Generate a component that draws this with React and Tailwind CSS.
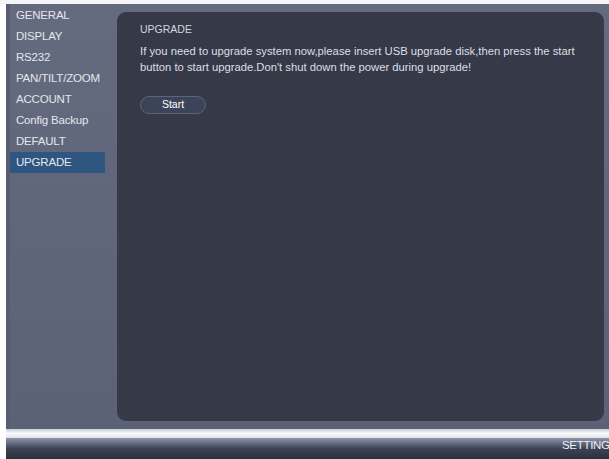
import React from 'react'

const menu = [
  'GENERAL',
  'DISPLAY',
  'RS232',
  'PAN/TILT/ZOOM',
  'ACCOUNT',
  'Config Backup',
  'DEFAULT',
  'UPGRADE',
]

export default function App() {
  return (
    <div
      className="flex h-[459px] w-[609px] flex-col overflow-hidden bg-white"
      style={{ fontFamily: '"Liberation Sans", Arial, sans-serif' }}
    >
      <div className="h-[4px] shrink-0 bg-[#f4f5f7]" />
      <div className="flex h-[425px] shrink-0 pl-[6px]">
        <div className="flex flex-1 bg-gradient-to-b from-[#656b7e] to-[#5c6276]">
          {/* side menu */}
          <div className="flex w-[111px] shrink-0 flex-col border-l-[4px] border-[#585d71] pt-[1px]">
            {menu.map((item) => (
              <div
                key={item}
                className={
                  item === 'UPGRADE'
                    ? 'flex h-[21px] w-[95px] items-center bg-[#2f5581] pl-[6px] text-[11.5px] tracking-[-0.2px] text-[#e3e7ef]'
                    : 'flex h-[21px] w-[95px] items-center pl-[6px] text-[11.5px] tracking-[-0.2px] text-[#e3e6ed]'
                }
              >
                {item}
              </div>
            ))}
          </div>

          {/* content panel */}
          <div className="mr-[5px] mt-[8px] mb-[8px] flex-1 rounded-[9px] bg-[#363a48] pl-[23px] pt-[9px]">
            <div className="text-[10.5px] leading-[16px] text-[#d3d6de]">UPGRADE</div>
            <div className="mt-[6px] whitespace-nowrap text-[11.25px] leading-[16px] text-[#dcdfe6]">
              If you need to upgrade system now,please insert USB upgrade disk,then press the start
              <br />
              button to start upgrade.Don't shut down the power during upgrade!
            </div>
            <div className="mt-[21px] flex h-[18px] w-[66px] items-center justify-center rounded-full border border-[#5c647a] bg-[#3c4459] text-[10.5px] text-white">
              Start
            </div>
          </div>
        </div>
      </div>

      {/* bottom bar */}
      <div className="flex flex-1 flex-col pl-[6px]">
        <div className="h-[9px] shrink-0 bg-gradient-to-b from-[#c9ccd6] via-[#fbfbfd] to-[#dfe1e8]" />
        <div className="relative flex-1 bg-gradient-to-b from-[#9298ab] via-[#3d4355] to-[#2b303c]">
          <div className="absolute left-[556px] top-[1px] text-[11.5px] leading-[12px] tracking-[-0.3px] text-[#eef0f5]">
            SETTING
          </div>
        </div>
      </div>
    </div>
  )
}
